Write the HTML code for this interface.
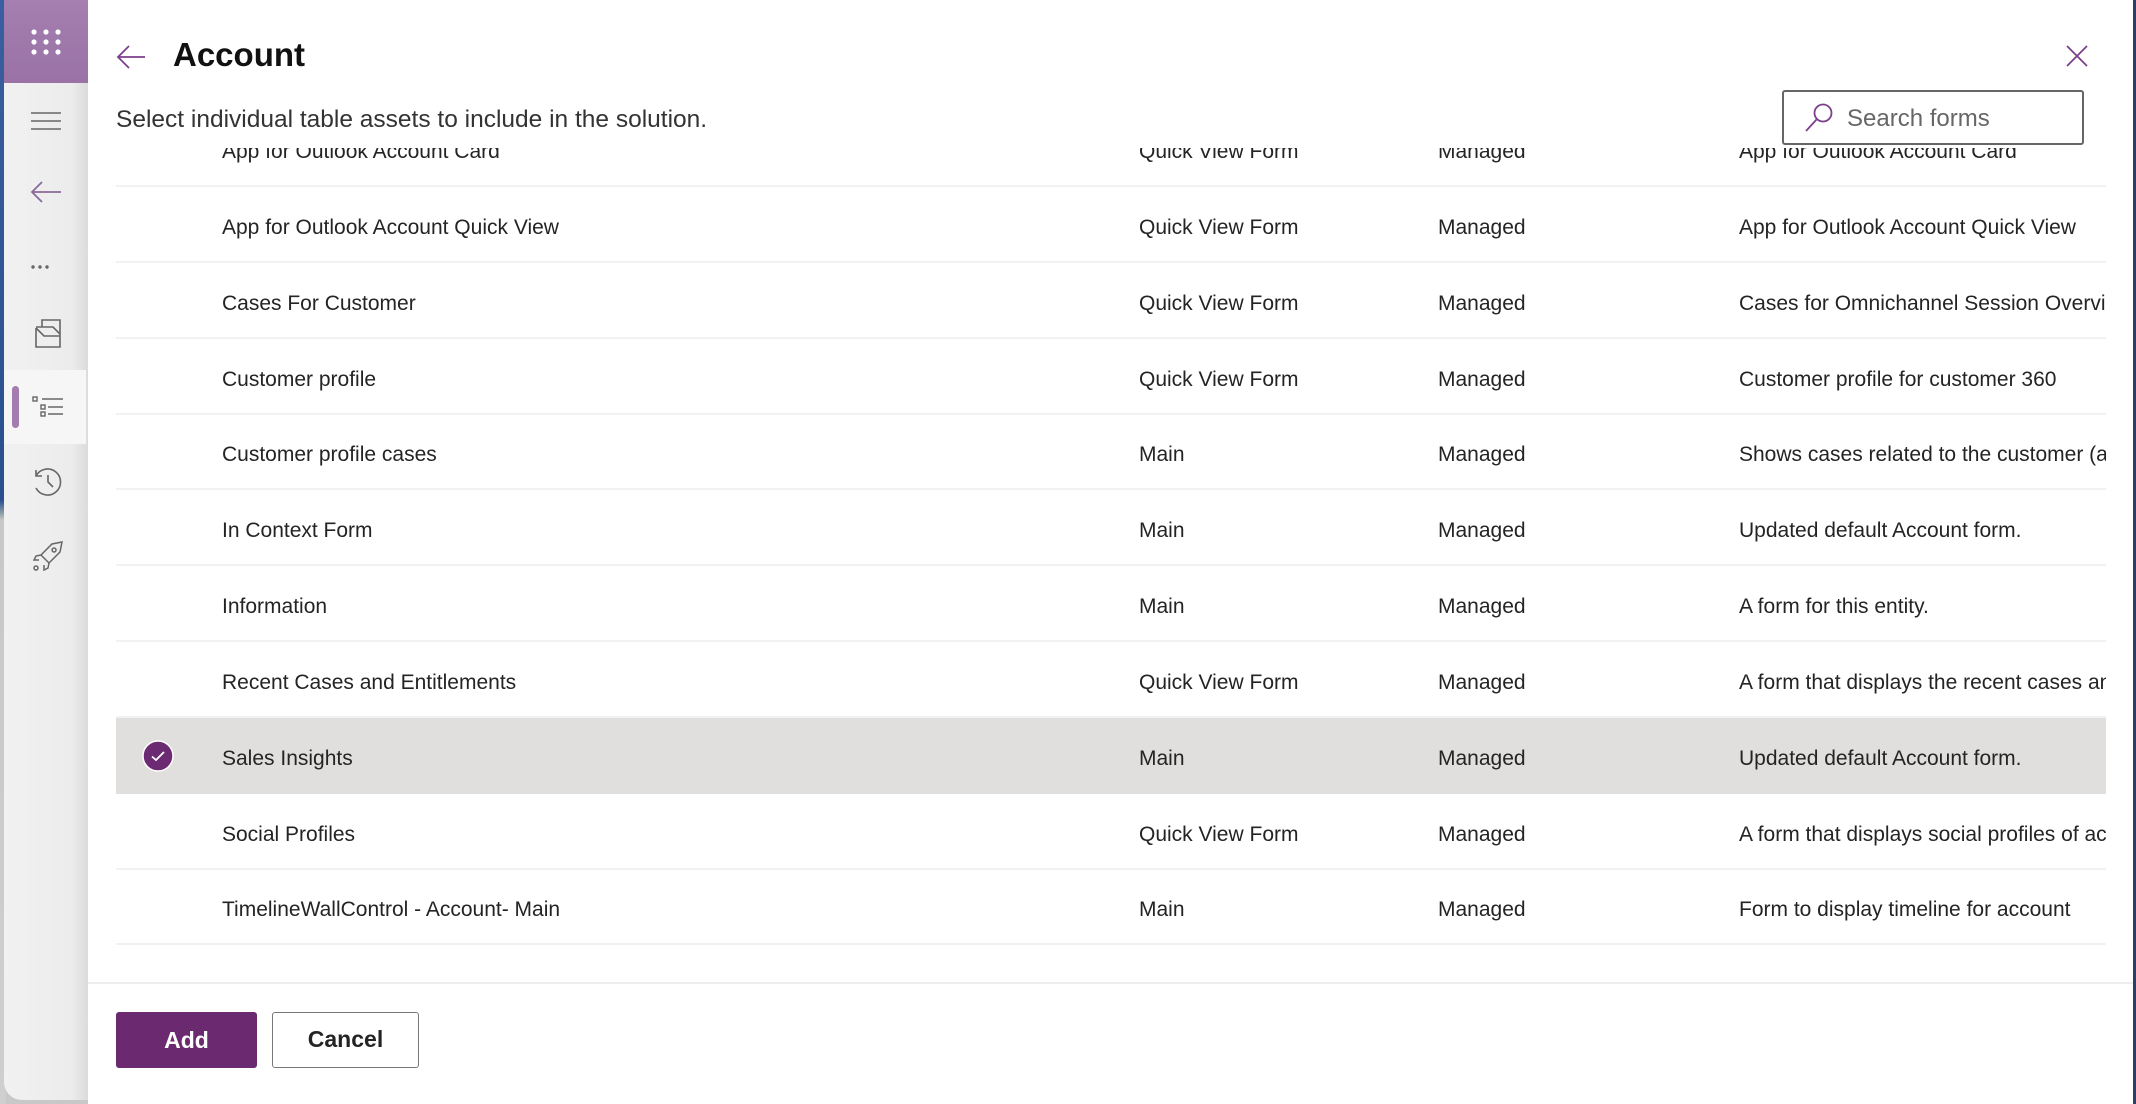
<!DOCTYPE html>
<html><head><meta charset="utf-8"><style>
*{margin:0;padding:0;box-sizing:border-box}
body{width:2136px;height:1104px;overflow:hidden;background:#c8c8c8;font-family:"Liberation Sans",sans-serif;position:relative}
.strip{position:absolute;left:0;top:0;width:6px;height:1104px;background:linear-gradient(#3a5fa0 0,#2a4f8f 500px,#9aa 515px,#c8c8c8 520px,#cfcfcf 100%)}
.side{position:absolute;left:4px;top:0;width:84px;height:1100px;background:linear-gradient(90deg,#f1f1f1,#ececec 80%,#dcdcdc);border-bottom-left-radius:18px}
.top{position:absolute;left:4px;top:0;width:84px;height:83px;background:linear-gradient(#a57fb0,#9a72a6)}
.sel{position:absolute;left:4px;top:370px;width:82px;height:74px;background:#f6f6f6}
.ind{position:absolute;left:12px;top:386px;width:7px;height:42px;border-radius:4px;background:#a37cb0}
.panel{position:absolute;left:88px;top:0;width:2045px;height:1104px;background:#fff}
.rb{position:absolute;left:2133px;top:0;width:3px;height:1104px;background:#2a3f6a}
.t{position:absolute;white-space:nowrap;color:#242424}
.row{position:absolute;left:0;width:1990px;height:76px;border-bottom:2px solid #f2f2f2;overflow:hidden}
.row span{position:absolute;top:3px;line-height:76px;font-size:21px;color:#242424;white-space:nowrap}
.c1{left:106px}.c2{left:1023px}.c3{left:1322px}.c4{left:1623px}
svg{position:absolute}
</style></head><body>
<div class="strip"></div>
<div class="side"></div>
<div class="top"></div>
<div class="sel"></div>
<div class="ind"></div>
<svg style="left:30px;top:28px" width="32" height="28" viewBox="0 0 32 28" fill="#fff"><circle cx="4" cy="4" r="2.6"/><circle cx="16" cy="4" r="2.6"/><circle cx="28" cy="4" r="2.6"/><circle cx="4" cy="14" r="2.6"/><circle cx="16" cy="14" r="2.6"/><circle cx="28" cy="14" r="2.6"/><circle cx="4" cy="24" r="2.6"/><circle cx="16" cy="24" r="2.6"/><circle cx="28" cy="24" r="2.6"/></svg>
<svg style="left:30px;top:110px" width="32" height="22" stroke="#666" stroke-width="1.6"><path d="M1 3H31M1 11H31M1 19H31"/></svg>
<svg style="left:30px;top:180px" width="32" height="24" stroke="#8a6a9a" stroke-width="1.8" fill="none"><path d="M31 12H2M12 2L2 12L12 22"/></svg>
<svg style="left:30px;top:264px" width="20" height="6" fill="#666"><circle cx="3" cy="3" r="1.7"/><circle cx="10" cy="3" r="1.7"/><circle cx="17" cy="3" r="1.7"/></svg>
<svg style="left:34px;top:318px" width="28" height="30" stroke="#666" stroke-width="1.6" fill="none"><path d="M2 10V29H26V16L19 9H2M2 10L10 18H26M8 9V2H26V16"/></svg>
<svg style="left:32px;top:396px" width="32" height="22" stroke="#666" stroke-width="1.4" fill="none"><rect x="1" y="1" width="4" height="4"/><rect x="9" y="9" width="4" height="4"/><rect x="9" y="16" width="4" height="4"/><path d="M10 3H31M16 11H31M16 18H31"/></svg>
<svg style="left:32px;top:466px" width="32" height="32" stroke="#666" stroke-width="1.6" fill="none"><path d="M4 10A13 13 0 1 1 4 22M4 4V10H10M16 9V16L21 21"/></svg>
<svg style="left:32px;top:540px" width="32" height="32" stroke="#666" stroke-width="1.5" fill="none"><path d="M30 2L20 4L9 15L17 23L28 12ZM9 15L4 16L2 20L7 20M17 23L16 28L12 30L12 25M22 8a2 2 0 1 0 .1 0"/><circle cx="4" cy="28" r="2"/></svg>
<div class="panel"></div>
<div class="rb"></div>
<svg style="left:116px;top:44px" width="30" height="26" stroke="#7b3f8c" stroke-width="1.8" fill="none"><path d="M29 13H2M13 2L2 13L13 24"/></svg>
<div class="t" style="left:173px;top:36px;font-size:33px;font-weight:bold;color:#111">Account</div>
<svg style="left:2066px;top:45px" width="22" height="22" stroke="#7b3f8c" stroke-width="1.8"><path d="M1 1L21 21M21 1L1 21"/></svg>
<div class="t" style="left:116px;top:106px;font-size:24.5px;color:#333">Select individual table assets to include in the solution.</div>
<div style="position:absolute;left:116px;top:148px;width:1990px;height:799px;overflow:hidden">
<div class="row" style="top:-37px"><span class="c1">App for Outlook Account Card</span><span class="c2">Quick View Form</span><span class="c3">Managed</span><span class="c4">App for Outlook Account Card</span></div>
<div class="row" style="top:39px"><span class="c1">App for Outlook Account Quick View</span><span class="c2">Quick View Form</span><span class="c3">Managed</span><span class="c4">App for Outlook Account Quick View</span></div>
<div class="row" style="top:115px"><span class="c1">Cases For Customer</span><span class="c2">Quick View Form</span><span class="c3">Managed</span><span class="c4">Cases for Omnichannel Session Overview</span></div>
<div class="row" style="top:191px"><span class="c1">Customer profile</span><span class="c2">Quick View Form</span><span class="c3">Managed</span><span class="c4">Customer profile for customer 360</span></div>
<div class="row" style="top:266px"><span class="c1">Customer profile cases</span><span class="c2">Main</span><span class="c3">Managed</span><span class="c4">Shows cases related to the customer (account)</span></div>
<div class="row" style="top:342px"><span class="c1">In Context Form</span><span class="c2">Main</span><span class="c3">Managed</span><span class="c4">Updated default Account form.</span></div>
<div class="row" style="top:418px"><span class="c1">Information</span><span class="c2">Main</span><span class="c3">Managed</span><span class="c4">A form for this entity.</span></div>
<div class="row" style="top:494px"><span class="c1">Recent Cases and Entitlements</span><span class="c2">Quick View Form</span><span class="c3">Managed</span><span class="c4">A form that displays the recent cases and entitlements</span></div>
<div class="row" style="top:570px;background:#e1dfdd;border-bottom-color:#e1dfdd"><span class="c1">Sales Insights</span><span class="c2">Main</span><span class="c3">Managed</span><span class="c4">Updated default Account form.</span>
<svg style="left:26px;top:22px" width="32" height="32"><circle cx="16" cy="16" r="15" fill="#6b2a72" stroke="#fff" stroke-width="1.5"/><path d="M10 16.5L14 20L22 12" stroke="#fff" stroke-width="1.8" fill="none"/></svg></div>
<div class="row" style="top:646px"><span class="c1">Social Profiles</span><span class="c2">Quick View Form</span><span class="c3">Managed</span><span class="c4">A form that displays social profiles of account</span></div>
<div class="row" style="top:721px"><span class="c1">TimelineWallControl - Account- Main</span><span class="c2">Main</span><span class="c3">Managed</span><span class="c4">Form to display timeline for account</span></div>
</div>
<div style="position:absolute;left:1782px;top:90px;width:302px;height:55px;border:2px solid #666;border-radius:3px;background:#fff"></div>
<svg style="left:1803px;top:102px" width="32" height="32" stroke="#7b3f8c" stroke-width="1.8" fill="none"><circle cx="20" cy="11" r="8.5"/><path d="M14 17L3 29"/></svg>
<div class="t" style="left:1847px;top:105px;font-size:24px;color:#666">Search forms</div>
<div style="position:absolute;left:88px;top:982px;width:2045px;height:2px;background:#eee"></div>
<div style="position:absolute;left:116px;top:1012px;width:141px;height:56px;background:#6b2a6f;border-radius:3px;color:#fff;font-size:23px;font-weight:bold;text-align:center;line-height:56px">Add</div>
<div style="position:absolute;left:272px;top:1012px;width:147px;height:56px;border:1.5px solid #777;border-radius:3px;color:#242424;font-size:23px;font-weight:bold;text-align:center;line-height:53px">Cancel</div>
</body></html>
